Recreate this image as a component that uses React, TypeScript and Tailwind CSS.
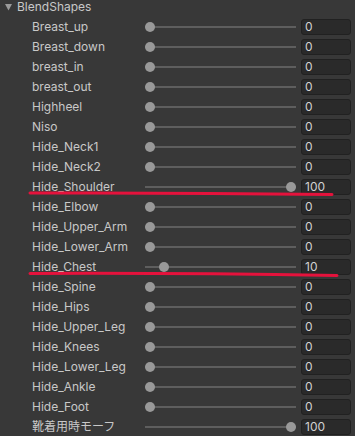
import React from "react";

const rows: [string, number][] = [
  ["Breast_up", 0],
  ["Breast_down", 0],
  ["breast_in", 0],
  ["breast_out", 0],
  ["Highheel", 0],
  ["Niso", 0],
  ["Hide_Neck1", 0],
  ["Hide_Neck2", 0],
  ["Hide_Shoulder", 100],
  ["Hide_Elbow", 0],
  ["Hide_Upper_Arm", 0],
  ["Hide_Lower_Arm", 0],
  ["Hide_Chest", 10],
  ["Hide_Spine", 0],
  ["Hide_Hips", 0],
  ["Hide_Upper_Leg", 0],
  ["Hide_Knees", 0],
  ["Hide_Lower_Leg", 0],
  ["Hide_Ankle", 0],
  ["Hide_Foot", 0],
  ["靴着用時モーフ", 100],
];

function Row({ label, value }: { label: string; value: number }) {
  return (
    <div className="flex h-[20px] items-center">
      <div className="w-[145px] pl-[32px] shrink-0 whitespace-nowrap text-[12px] text-[#c8c8c8]">{label}</div>
      <div className="relative h-[20px] w-[151px] shrink-0">
        <div className="absolute left-0 right-0 top-[9px] h-[2px] bg-[#5e5e5e]" />
        <div
          className="absolute top-[5px] h-[10px] w-[10px] rounded-full bg-[#999999]"
          style={{ left: 0 + (value / 100) * 141 }}
        />
      </div>
      <div className="ml-[5px] flex h-[16px] w-[50px] items-center rounded-[3px] border border-[#212121] bg-[#2a2a2a] pl-[3px] text-[12px] text-[#d2d2d2]">
        {value}
      </div>
    </div>
  );
}

export default function App() {
  return (
    <div
      className="relative h-[436px] w-[355px] overflow-hidden bg-[#383838]"
      style={{ fontFamily: "Inter, 'Noto Sans CJK JP', sans-serif" }}
    >
      <div className="flex h-[17px] items-center pb-[3px]">
        <svg width="17" height="12" viewBox="0 0 17 12" className="shrink-0">
          <polygon points="5,3 12,3 8.5,9.5" fill="#9a9a9a" />
        </svg>
        <span className="text-[12px] text-[#c8c8c8]">BlendShapes</span>
      </div>
      {rows.map(([l, v]) => (
        <Row key={l} label={l} value={v} />
      ))}
      <svg className="pointer-events-none absolute left-0 top-0" width="355" height="436">
        <path d="M30 193 Q 180 192.5 332 194.5" stroke="#e5123c" strokeWidth="3" fill="none" strokeLinecap="round" />
        <path d="M30 273.5 Q 180 272.8 337 275.5" stroke="#e5123c" strokeWidth="3" fill="none" strokeLinecap="round" />
      </svg>
    </div>
  );
}
